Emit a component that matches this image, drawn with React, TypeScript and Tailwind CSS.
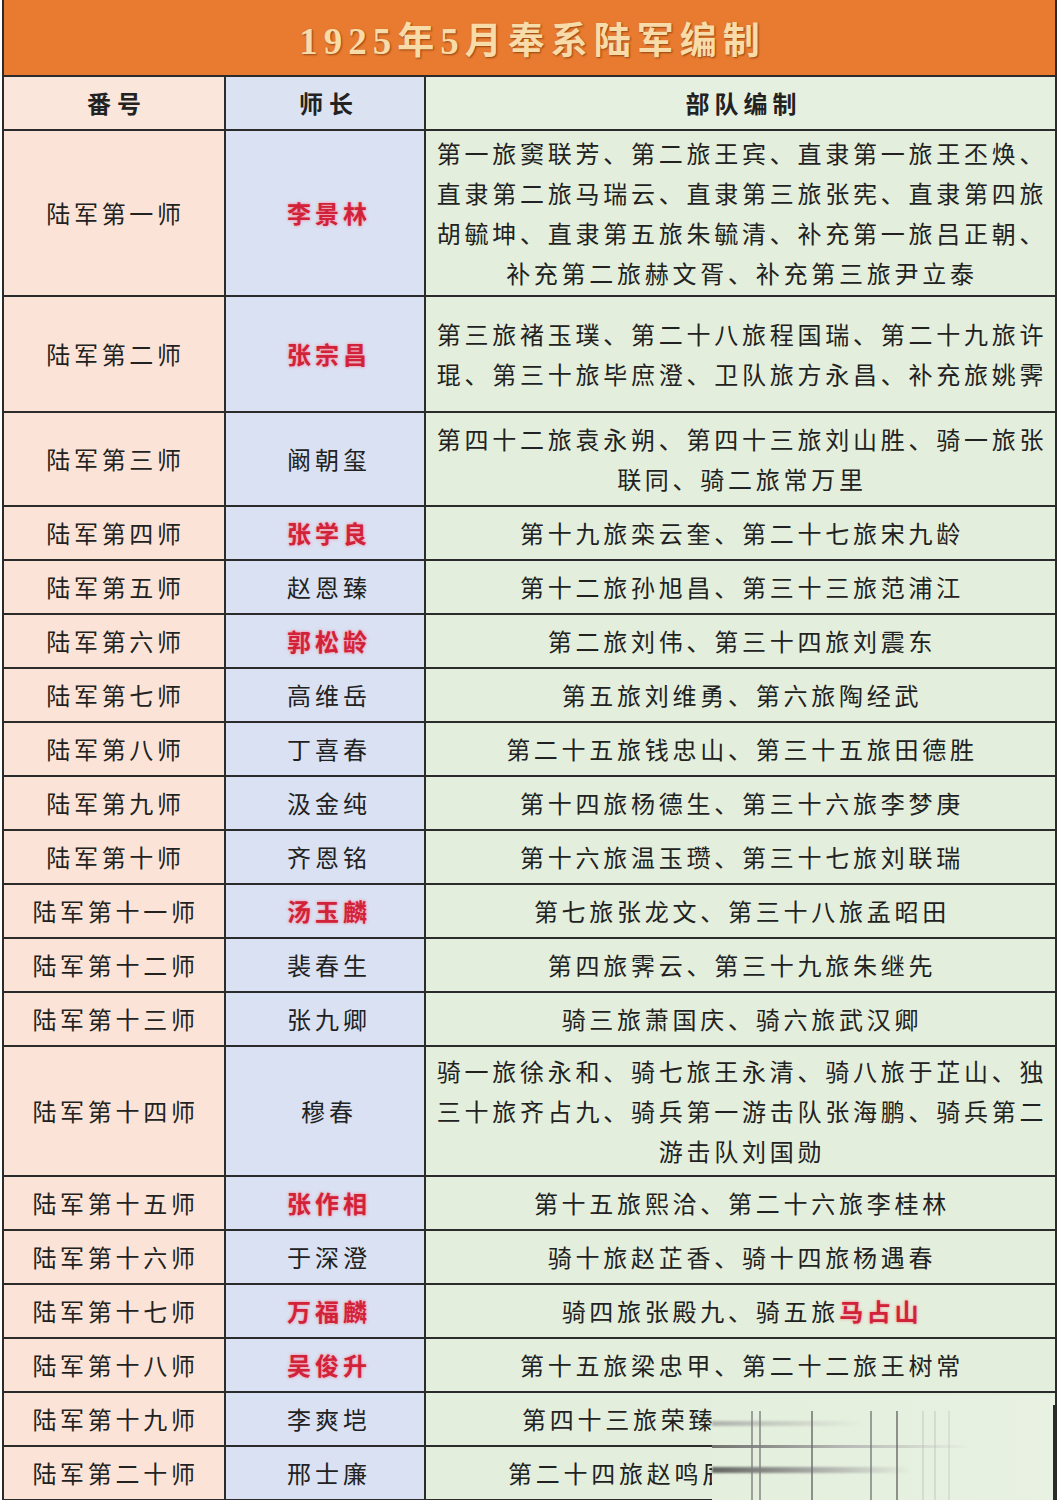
import React from "react";

type Row = {
  unit: string;
  chief: string;
  red?: boolean;
  h: string;
  lines: React.ReactNode[];
  indent?: string;
};

const Red = ({ children }: { children: React.ReactNode }) => (
  <span className="font-bold text-[#d0233a] [text-shadow:0_0_3px_rgba(255,110,130,0.9)]">{children}</span>
);

const rows: Row[] = [
  {
    unit: "陆军第一师",
    chief: "李景林",
    red: true,
    h: "h-[166px]",
    lines: [
      "第一旅窦联芳、第二旅王宾、直隶第一旅王丕焕、",
      "直隶第二旅马瑞云、直隶第三旅张宪、直隶第四旅",
      "胡毓坤、直隶第五旅朱毓清、补充第一旅吕正朝、",
      "补充第二旅赫文胥、补充第三旅尹立泰",
    ],
  },
  {
    unit: "陆军第二师",
    chief: "张宗昌",
    red: true,
    h: "h-[116px]",
    lines: ["第三旅褚玉璞、第二十八旅程国瑞、第二十九旅许", "琨、第三十旅毕庶澄、卫队旅方永昌、补充旅姚霁"],
  },
  {
    unit: "陆军第三师",
    chief: "阚朝玺",
    h: "h-[94px]",
    lines: ["第四十二旅袁永朔、第四十三旅刘山胜、骑一旅张", "联同、骑二旅常万里"],
  },
  { unit: "陆军第四师", chief: "张学良", red: true, h: "h-[54px]", lines: ["第十九旅栾云奎、第二十七旅宋九龄"] },
  { unit: "陆军第五师", chief: "赵恩臻", h: "h-[54px]", lines: ["第十二旅孙旭昌、第三十三旅范浦江"] },
  { unit: "陆军第六师", chief: "郭松龄", red: true, h: "h-[54px]", lines: ["第二旅刘伟、第三十四旅刘震东"] },
  { unit: "陆军第七师", chief: "高维岳", h: "h-[54px]", lines: ["第五旅刘维勇、第六旅陶经武"] },
  { unit: "陆军第八师", chief: "丁喜春", h: "h-[54px]", lines: ["第二十五旅钱忠山、第三十五旅田德胜"] },
  { unit: "陆军第九师", chief: "汲金纯", h: "h-[54px]", lines: ["第十四旅杨德生、第三十六旅李梦庚"] },
  { unit: "陆军第十师", chief: "齐恩铭", h: "h-[54px]", lines: ["第十六旅温玉瓒、第三十七旅刘联瑞"] },
  { unit: "陆军第十一师", chief: "汤玉麟", red: true, h: "h-[54px]", lines: ["第七旅张龙文、第三十八旅孟昭田"] },
  { unit: "陆军第十二师", chief: "裴春生", h: "h-[54px]", lines: ["第四旅霁云、第三十九旅朱继先"] },
  { unit: "陆军第十三师", chief: "张九卿", h: "h-[54px]", lines: ["骑三旅萧国庆、骑六旅武汉卿"] },
  {
    unit: "陆军第十四师",
    chief: "穆春",
    h: "h-[130px]",
    lines: [
      "骑一旅徐永和、骑七旅王永清、骑八旅于芷山、独",
      "三十旅齐占九、骑兵第一游击队张海鹏、骑兵第二",
      "游击队刘国勋",
    ],
  },
  { unit: "陆军第十五师", chief: "张作相", red: true, h: "h-[54px]", lines: ["第十五旅熙洽、第二十六旅李桂林"] },
  { unit: "陆军第十六师", chief: "于深澄", h: "h-[54px]", lines: ["骑十旅赵芷香、骑十四旅杨遇春"] },
  {
    unit: "陆军第十七师",
    chief: "万福麟",
    red: true,
    h: "h-[54px]",
    lines: [
      <>
        骑四旅张殿九、骑五旅<Red>马占山</Red>
      </>,
    ],
  },
  { unit: "陆军第十八师", chief: "吴俊升", red: true, h: "h-[54px]", lines: ["第十五旅梁忠甲、第二十二旅王树常"] },
  { unit: "陆军第十九师", chief: "李爽垲", h: "h-[54px]", lines: ["第四十三旅荣臻"], indent: "pl-[96px]" },
  { unit: "陆军第二十师", chief: "邢士廉", h: "h-[54px]", lines: ["第二十四旅赵鸣辰"], indent: "pl-[82px]" },
];

// smeared strip that covers the end of the last two rows in the source picture
const Glitch = () => (
  <div className="absolute left-[712px] top-[1395px] w-[343px] h-[105px] bg-gradient-to-r from-[#e4efdd] to-[#e8f1e2] flex">
    <div className="flex-1 flex flex-col pt-[26px] gap-[19px]">
      <div className="w-[150px] h-[5px] bg-gradient-to-r from-[#9a9a9a] to-transparent opacity-70 blur-[1px]" />
      <div className="w-[260px] h-[3px] bg-gradient-to-r from-[#555] via-[#aaa] to-transparent opacity-80" />
      <div className="w-[200px] h-[6px] bg-gradient-to-r from-[#444] via-[#999] to-transparent opacity-80 blur-[1px]" />
    </div>
    <div className="absolute inset-0 pt-[16px] pl-[39px] flex items-stretch">
      <div className="w-[2px] bg-[#7d7d7d] opacity-70" />
      <div className="w-[2px] ml-[6px] bg-[#7d7d7d] opacity-70" />
      <div className="w-[2px] ml-[50px] bg-[#666] opacity-70" />
      <div className="w-[2px] ml-[57px] bg-[#777] opacity-70" />
      <div className="w-[2px] ml-[24px] bg-[#666] opacity-70" />
      <div className="w-[2px] ml-[24px] bg-[#bbb] opacity-40" />
      <div className="w-[2px] ml-[10px] bg-[#bbb] opacity-40" />
      <div className="w-[2px] ml-[12px] bg-[#bbb] opacity-30" />
      <div className="flex-1" />
      <div className="w-[2px] -mt-[6px] bg-[#2b2b2b]" />
    </div>
  </div>
);

export default function App() {
  return (
    <div className="relative w-[1059px] h-[1500px] overflow-hidden bg-white font-['Noto_Sans_CJK_SC',sans-serif] text-[24px] text-[#222]">
      <div className="mx-[2px] border-x-2 border-[#2b2b2b]">
        <div className="h-[77px] pt-[8px] bg-[#e97b30] border-b-2 border-[#2b2b2b] flex items-center justify-center">
          <span className="pl-[6px] font-['Liberation_Serif','Noto_Sans_CJK_SC',serif] text-[37px] font-bold tracking-[6px] text-[#f7dba8] [text-shadow:1px_1px_2px_rgba(110,45,0,0.7)]">
            1925年5月奉系陆军编制
          </span>
        </div>

        <div className="grid grid-cols-[222px_200px_1fr]">
          <div className="h-[54px] bg-[#fbe6db] border-r-2 border-b-2 border-[#2b2b2b] flex items-center justify-center pl-[6px] font-bold tracking-[6px]">
            番号
          </div>
          <div className="h-[54px] bg-[#dbe3f3] border-r-2 border-b-2 border-[#2b2b2b] flex items-center justify-center pl-[8px] font-bold tracking-[6px]">
            师长
          </div>
          <div className="h-[54px] bg-[#e6f0e1] border-b-2 border-[#2b2b2b] flex items-center justify-center pl-[6px] font-bold tracking-[5px]">
            部队编制
          </div>

          {rows.map((r) => (
            <React.Fragment key={r.unit}>
              <div className={`${r.h} bg-[#fbe4d7] border-r-2 border-b-2 border-[#2b2b2b] flex items-center justify-center pl-[3px] tracking-[3.7px]`}>
                {r.unit}
              </div>
              <div className={`${r.h} bg-[#d9e1f2] border-r-2 border-b-2 border-[#2b2b2b] flex items-center justify-center pl-[8px] tracking-[4px]`}>
                {r.red ? <Red>{r.chief}</Red> : r.chief}
              </div>
              <div
                className={`${r.h} bg-[#e3efdc] border-b-2 border-[#2b2b2b] flex flex-col justify-center ${
                  r.indent ? `items-start ${r.indent}` : "items-center pl-[3px]"
                }`}
              >
                {r.lines.map((l, i) => (
                  <div key={i} className="leading-[40px] tracking-[3.75px] whitespace-nowrap">
                    {l}
                  </div>
                ))}
              </div>
            </React.Fragment>
          ))}
        </div>
      </div>
      <Glitch />
    </div>
  );
}
